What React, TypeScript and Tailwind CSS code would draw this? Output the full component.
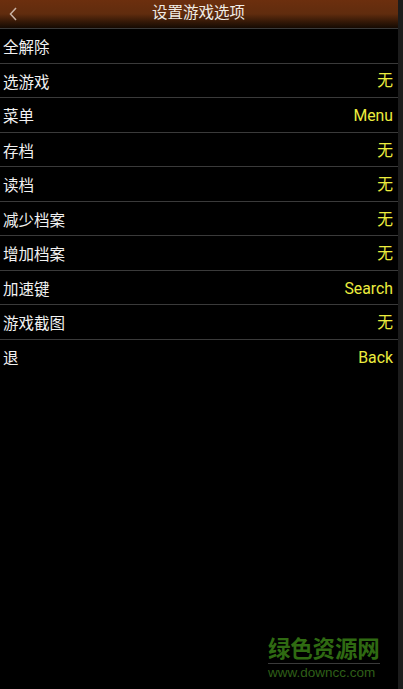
const rows = [
  { label: '全解除', value: '' },
  { label: '选游戏', value: '无' },
  { label: '菜单', value: 'Menu' },
  { label: '存档', value: '无' },
  { label: '读档', value: '无' },
  { label: '减少档案', value: '无' },
  { label: '增加档案', value: '无' },
  { label: '加速键', value: 'Search' },
  { label: '游戏截图', value: '无' },
  { label: '退', value: 'Back' },
]

export default function App() {
  return (
    <div className="relative flex h-[689px] w-[403px] overflow-hidden bg-[#1c1c1c] font-['Roboto','Noto_Sans_CJK_SC',sans-serif]">
      <div className="h-full w-[398px] bg-black">
        <header className="flex h-[28px] items-center bg-gradient-to-b from-[#6c2f0e] via-[#602c0e] to-[#150a03]">
          <svg className="ml-[9px] h-[14px] w-[8px]" viewBox="0 0 8 14" fill="none">
            <path d="M7 1 L1.5 7 L7 13" stroke="#c9b3a5" strokeWidth="1.5" />
          </svg>
          <h1 className="ml-[135px] text-[15.5px] leading-none text-[#f0ece6]">设置游戏选项</h1>
        </header>
        {rows.map((row) => (
          <div
            key={row.label}
            className="flex h-[34.55px] items-center justify-between border-t border-[#3a3a3a] pt-[2px] pl-[3px] pr-[5px]"
          >
            <span className="font-['Noto_Sans_CJK_SC',sans-serif] text-[15.5px] leading-none text-[#f2f2f2]">
              {row.label}
            </span>
            <span className="text-[15.8px] leading-none text-[#ecec3e]">{row.value}</span>
          </div>
        ))}
      </div>

      {/* watermark */}
      <div className="absolute left-[268px] top-[637px] w-[112px]">
        <div className="border-b border-[#3a3a3a] pb-[1px] text-[22.5px] font-bold leading-[25px] tracking-[-0.2px] whitespace-nowrap text-[#2f6a12]">
          绿色资源网
        </div>
        <div className="font-['Liberation_Sans',sans-serif] text-[13.5px] leading-[17px] whitespace-nowrap text-[#2f5f18]">
          www.downcc.com
        </div>
      </div>
    </div>
  )
}
